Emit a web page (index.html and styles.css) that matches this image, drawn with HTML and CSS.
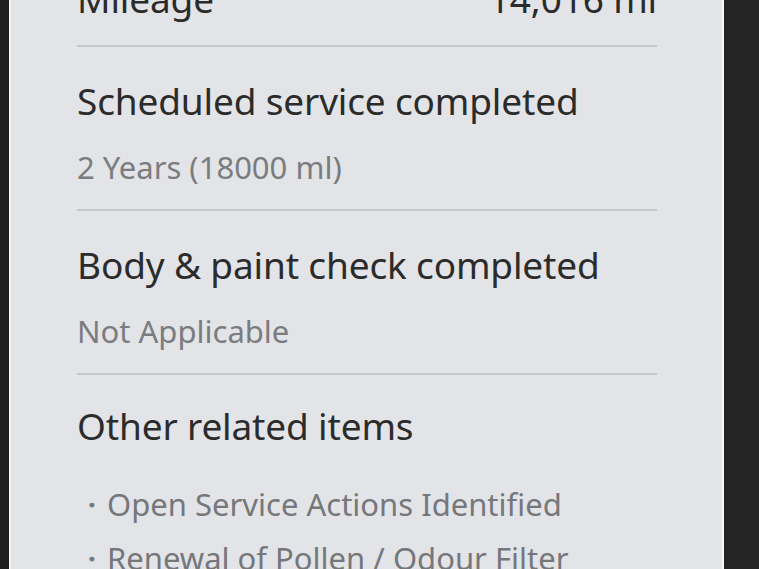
FILE: index.html
```html
<!DOCTYPE html>
<html>
<head>
<meta charset="utf-8">
<link rel="stylesheet" href="styles.css">
</head>
<body>
<div class="frame">
  <div class="screen">
    <div class="content">
      <div class="row">
        <span class="label">Mileage</span>
        <span class="value">14,016 mi</span>
      </div>
      <div class="section">
        <div class="title">Scheduled service completed</div>
        <div class="sub">2 Years (18000 ml)</div>
      </div>
      <div class="section">
        <div class="title">Body &amp; paint check completed</div>
        <div class="sub">Not Applicable</div>
      </div>
      <div class="section last">
        <div class="title">Other related items</div>
        <ul class="items">
          <li><span class="dot">・</span>Open Service Actions Identified</li>
          <li><span class="dot">・</span>Renewal of Pollen / Odour Filter</li>
        </ul>
      </div>
    </div>
  </div>
</div>
</body>
</html>
```

FILE: styles.css
```css
html, body {
  margin: 0;
  padding: 0;
  height: 100%;
  overflow: hidden;
  background: #242424;
}
.frame {
  display: flex;
  height: 569px;
  padding-left: 9px;
  background: #1e1e1e;
}
.screen {
  width: 711px;
  height: 569px;
  background: #e3e4e8;
  border-left: 2px solid #f4f4f6;
  border-right: 2px solid #f7f7f8;
  overflow: hidden;
  font-family: "Noto Sans", "Open Sans", sans-serif;
}
.frame::after {
  content: "";
  flex: 1;
  background: #242424;
}
.content {
  padding: 0 65px 0 66px;
  margin-top: -26px;
}
.row {
  display: flex;
  justify-content: space-between;
  font-size: 37px;
  line-height: 50px;
  color: #2b2b2b;
  letter-spacing: -0.15px;
  padding-bottom: 21px;
  border-bottom: 2px solid #c6c7cb;
}
.section {
  border-bottom: 2px solid #c6c7cb;
  padding: 29px 0 21px;
}
.section.last {
  border-bottom: none;
  padding-top: 26px;
}
.title {
  font-size: 37px;
  line-height: 50px;
  color: #2b2b2b;
  letter-spacing: -0.15px;
}
.sub {
  font-size: 31px;
  line-height: 42px;
  color: #7b7c7f;
  margin-top: 20px;
}
.items {
  list-style: none;
  margin: 26px 0 0;
  padding: 0;
}
.items li {
  font-size: 31px;
  line-height: 54px;
  color: #76777a;
}
.dot {
  display: inline-block;
  width: 31px;
  margin-left: -1px;
}
```
